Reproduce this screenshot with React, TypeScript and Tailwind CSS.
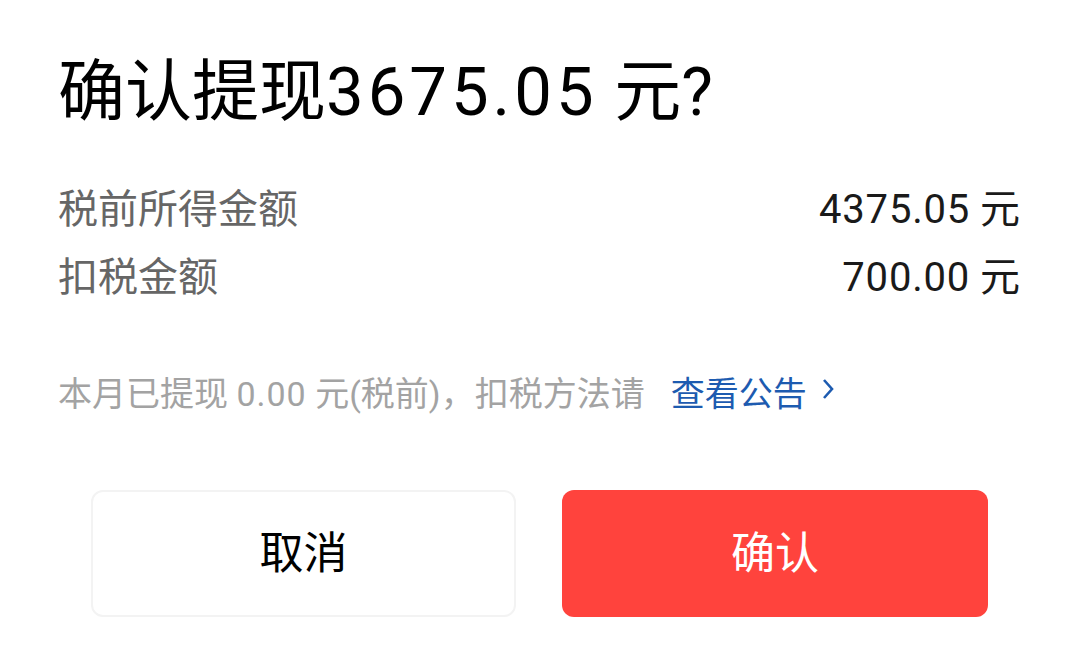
export default function App() {
  return (
    <div
      className="w-[1078px] h-[662px] bg-white flex flex-col"
      style={{ fontFamily: 'Roboto, "Noto Sans CJK SC", sans-serif' }}
    >
      <div className="px-[58px] pt-[52px]">
        <h1 className="text-[67px] leading-[80px] text-black font-normal">
          确认提现<span className="tracking-[4px]">3675.05</span> 元?
        </h1>

        <div className="mt-[44px] flex flex-col">
          <div className="flex items-center justify-between h-[68px]">
            <span className="text-[40px] text-[#666666]">税前所得金额</span>
            <span className="text-[40px] text-[#1a1a1a]">
              <span className="tracking-[0.8px]">4375.05</span> 元
            </span>
          </div>
          <div className="flex items-center justify-between h-[68px]">
            <span className="text-[40px] text-[#666666]">扣税金额</span>
            <span className="text-[40px] text-[#1a1a1a]">
              <span className="tracking-[0.8px]">700.00</span> 元
            </span>
          </div>
        </div>

        <div className="mt-[60px] flex items-center text-[34px] leading-[44px]">
          <span className="text-[#a3a3a3]">
            本月已提现 <span className="tracking-[1px]">0.00</span> 元(税前)，扣税方法请
          </span>
          <span className="ml-[26px] text-[#1d5bb0]">查看公告</span>
          <svg
            width="14"
            height="24"
            viewBox="0 0 14 24"
            className="ml-[14px] mb-[10px]"
            fill="none"
            stroke="#1d5bb0"
            strokeWidth="2.6"
          >
            <path d="M3 3 L11 12 L3 21" />
          </svg>
        </div>
      </div>

      <div className="mt-[74px] pl-[91px] flex gap-[46px]">
        <button className="w-[425px] h-[127px] rounded-[12px] border-2 border-[#f3f3f3] bg-white text-[44px] text-black">
          取消
        </button>
        <button className="w-[426px] h-[127px] rounded-[12px] bg-[#ff433d] text-[44px] text-white">
          确认
        </button>
      </div>
    </div>
  );
}
